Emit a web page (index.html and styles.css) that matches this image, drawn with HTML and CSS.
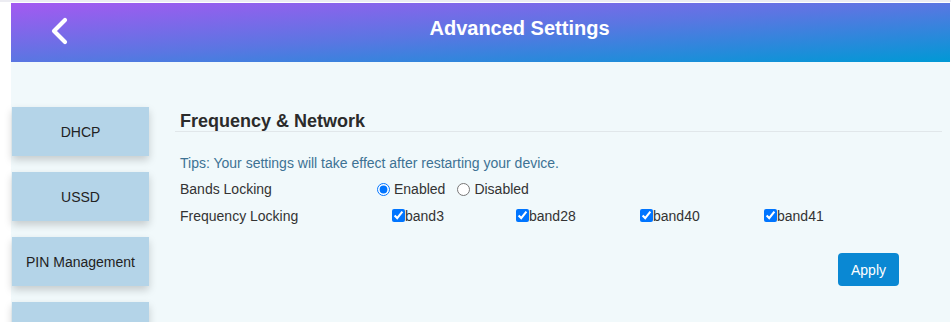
FILE: index.html
```html
<!DOCTYPE html>
<html lang="en">
<head>
<meta charset="utf-8">
<title>Advanced Settings</title>
<link rel="stylesheet" href="styles.css">
</head>
<body>
<div class="app">
  <header class="topbar">
    <button class="back" type="button" aria-label="Back">
      <svg width="20" height="28" viewBox="0 0 20 28"><polyline points="15,3 4,14 15,25" fill="none" stroke="#fff" stroke-width="4.2" stroke-linecap="round" stroke-linejoin="round"/></svg>
    </button>
    <h1 class="title">Advanced Settings</h1>
  </header>
  <div class="content">
    <nav class="sidebar">
      <a class="side-btn">DHCP</a>
      <a class="side-btn">USSD</a>
      <a class="side-btn">PIN Management</a>
      <a class="side-btn"></a>
    </nav>
    <main class="main">
      <h2 class="section-title">Frequency &amp; Network</h2>
      <p class="tips">Tips: Your settings will take effect after restarting your device.</p>
      <div class="row">
        <span class="row-label">Bands Locking</span>
        <div class="radios">
          <label class="radio"><input type="radio" name="lock" checked>Enabled</label>
          <label class="radio"><input type="radio" name="lock">Disabled</label>
        </div>
      </div>
      <div class="row">
        <span class="row-label">Frequency Locking</span>
        <div class="bands">
          <label class="band"><input type="checkbox" checked>band3</label>
          <label class="band"><input type="checkbox" checked>band28</label>
          <label class="band"><input type="checkbox" checked>band40</label>
          <label class="band"><input type="checkbox" checked>band41</label>
        </div>
      </div>
      <div class="actions">
        <button class="apply" type="button">Apply</button>
      </div>
    </main>
  </div>
</div>
</body>
</html>
```

FILE: styles.css
```css
html, body {
  margin: 0;
  padding: 0;
  height: 322px;
  overflow: hidden;
}
body {
  background: #ffffff;
  font-family: "Liberation Sans", Arial, sans-serif;
  border-top: 2px solid #ececf2;
  box-sizing: border-box;
}
.app {
  margin: 1px 1px 0 11px;
}
.topbar {
  height: 59px;
  display: flex;
  align-items: flex-start;
  background: linear-gradient(to bottom right, #a459f1 0%, #5a76e2 50%, #0099d5 100%);
}
.back {
  margin: 14px 0 0 39px;
  width: 20px;
  height: 28px;
  padding: 0;
  border: 0;
  background: none;
  display: flex;
}
.title {
  flex: 1;
  margin: 0;
  padding: 13px 0 0 19px;
  text-align: center;
  color: #ffffff;
  font-size: 20px;
  line-height: 24px;
  font-weight: bold;
}
.content {
  background: #f1f9fb;
  display: flex;
  min-height: 400px;
}
.sidebar {
  width: 137px;
  margin-left: 1px;
  padding-top: 45px;
  display: flex;
  flex-direction: column;
  gap: 16px;
}
.side-btn {
  height: 49px;
  background: #b4d4e8;
  color: #222;
  font-size: 14px;
  display: flex;
  align-items: center;
  justify-content: center;
  box-shadow: 0 4px 8px rgba(0, 0, 0, 0.18);
}
.main {
  flex: 1;
  margin: 0 8px 0 26px;
  padding-top: 49px;
  color: #333;
  font-size: 14px;
}
.section-title {
  margin: 0;
  padding: 0 0 0 5px;
  font-size: 18px;
  line-height: 20px;
  font-weight: bold;
  color: #2b2b2b;
  border-bottom: 1px solid #e1e7ea;
}
.tips {
  margin: 22px 0 3px 5px;
  line-height: 18px;
  color: #3d7294;
}
.row {
  display: flex;
  align-items: center;
  margin-left: 5px;
  height: 27px;
}
.row-label {
  width: 197px;
}
.radios {
  display: flex;
  align-items: center;
  gap: 12px;
}
.radio {
  display: flex;
  align-items: center;
  gap: 4px;
}
.radio input {
  margin: 1px 0 0 0;
  width: 13px;
  height: 13px;
}
.bands {
  display: flex;
  margin-left: 15px;
}
.band {
  width: 124px;
  display: flex;
  align-items: center;
}
.band input {
  margin: 0;
  width: 13px;
  height: 13px;
}
.actions {
  display: flex;
  justify-content: flex-end;
  margin: 24px 43px 0 0;
}
.apply {
  width: 61px;
  height: 33px;
  border: 0;
  border-radius: 4px;
  background: #0a88d3;
  color: #fff;
  font-family: "Liberation Sans", Arial, sans-serif;
  font-size: 14px;
}
```
